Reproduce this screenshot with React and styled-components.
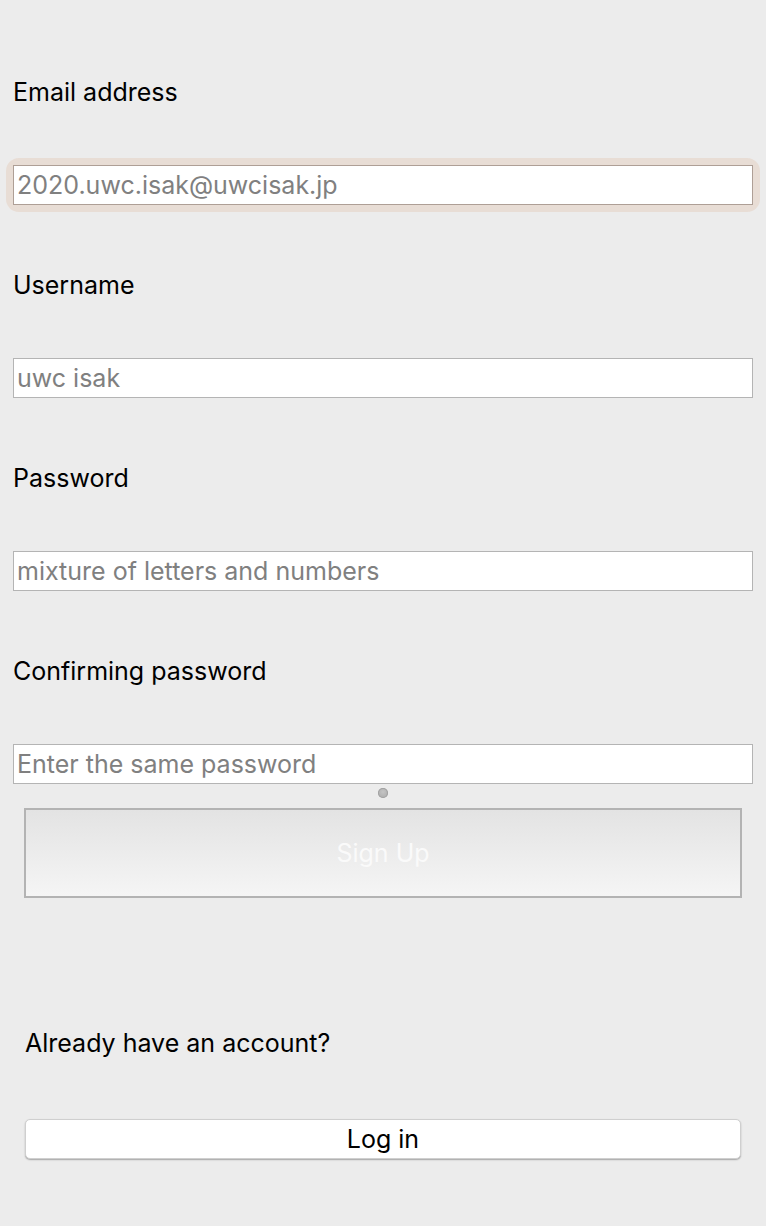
import React from 'react';
import styled, { createGlobalStyle } from 'styled-components';

const GlobalStyle = createGlobalStyle`
body {
    margin: 0;
    background: #ececec;
    font-family: Inter, "Liberation Sans", Arial, sans-serif;
}
`;

const Page = styled.div`
display: flex;
flex-direction: column;
padding: 78px 13px 60px 13px;
min-height: 1226px;
box-sizing: border-box;
`;

const Field = styled.div`
display: flex;
flex-direction: column;
margin-bottom: ${props => props.last ? '0' : '66px'};
`;

const Label = styled.label`
font-size: 25px;
line-height: 28px;
color: #000;
margin-bottom: 59px;
`;

const InputWrap = styled.div`
border-radius: 6px;
box-shadow: ${props => props.focused ? '0 0 0 7px #e8ddd5' : 'none'};
`;

const Input = styled.input`
display: block;
width: 100%;
height: 40px;
box-sizing: border-box;
margin: 0;
padding: 0 3px;
border: 1px solid ${props => props.focused ? '#ae9f96' : '#b4b4b4'};
background: #fff;
font-family: Inter, "Liberation Sans", Arial, sans-serif;
font-size: 25px;
color: #000;
outline: none;

&::placeholder {
    color: #808080;
}
`;

const Dot = styled.div`
align-self: center;
width: 10px;
height: 10px;
margin: 4px 0 10px 0;
border-radius: 50%;
background: radial-gradient(circle at 50% 40%, #c4c4c4, #a8a8a8);
box-shadow: inset 0 0 0 1px #a2a2a2;
`;

const SignUpButton = styled.button`
margin: 0 11px 0 11px;
height: 90px;
border: 2px solid #b3b3b3;
background: linear-gradient(to bottom, #e3e3e3, #f5f5f5);
color: #fafafa;
font-family: Inter, "Liberation Sans", Arial, sans-serif;
font-size: 25px;
padding: 0;
`;

const Question = styled.p`
margin: 131px 0 62px 12px;
font-size: 25px;
line-height: 28px;
color: #000;
`;

const LoginButton = styled.button`
margin: 0 12px;
height: 40px;
border: 1px solid #cfcfcf;
border-radius: 5px;
background: #fff;
box-shadow: 0 1px 1.5px rgba(0, 0, 0, 0.3);
font-family: Inter, "Liberation Sans", Arial, sans-serif;
font-size: 25px;
color: #000;
padding: 0;
`;

const fields = [
    { label: 'Email address', placeholder: '2020.uwc.isak@uwcisak.jp', type: 'email', focused: true },
    { label: 'Username', placeholder: 'uwc isak', type: 'text' },
    { label: 'Password', placeholder: 'mixture of letters and numbers', type: 'password' },
    { label: 'Confirming password', placeholder: 'Enter the same password', type: 'password' },
];

export default function App() {
    return (
        <Page>
            <GlobalStyle />
            {fields.map((f, key) => (
                <Field key={key} last={key === fields.length - 1}>
                    <Label>{f.label}</Label>
                    <InputWrap focused={f.focused}>
                        <Input type={f.type} placeholder={f.placeholder} focused={f.focused} />
                    </InputWrap>
                </Field>
            ))}
            <Dot />
            <SignUpButton>Sign Up</SignUpButton>
            <Question>Already have an account?</Question>
            <LoginButton>Log in</LoginButton>
        </Page>
    );
}
